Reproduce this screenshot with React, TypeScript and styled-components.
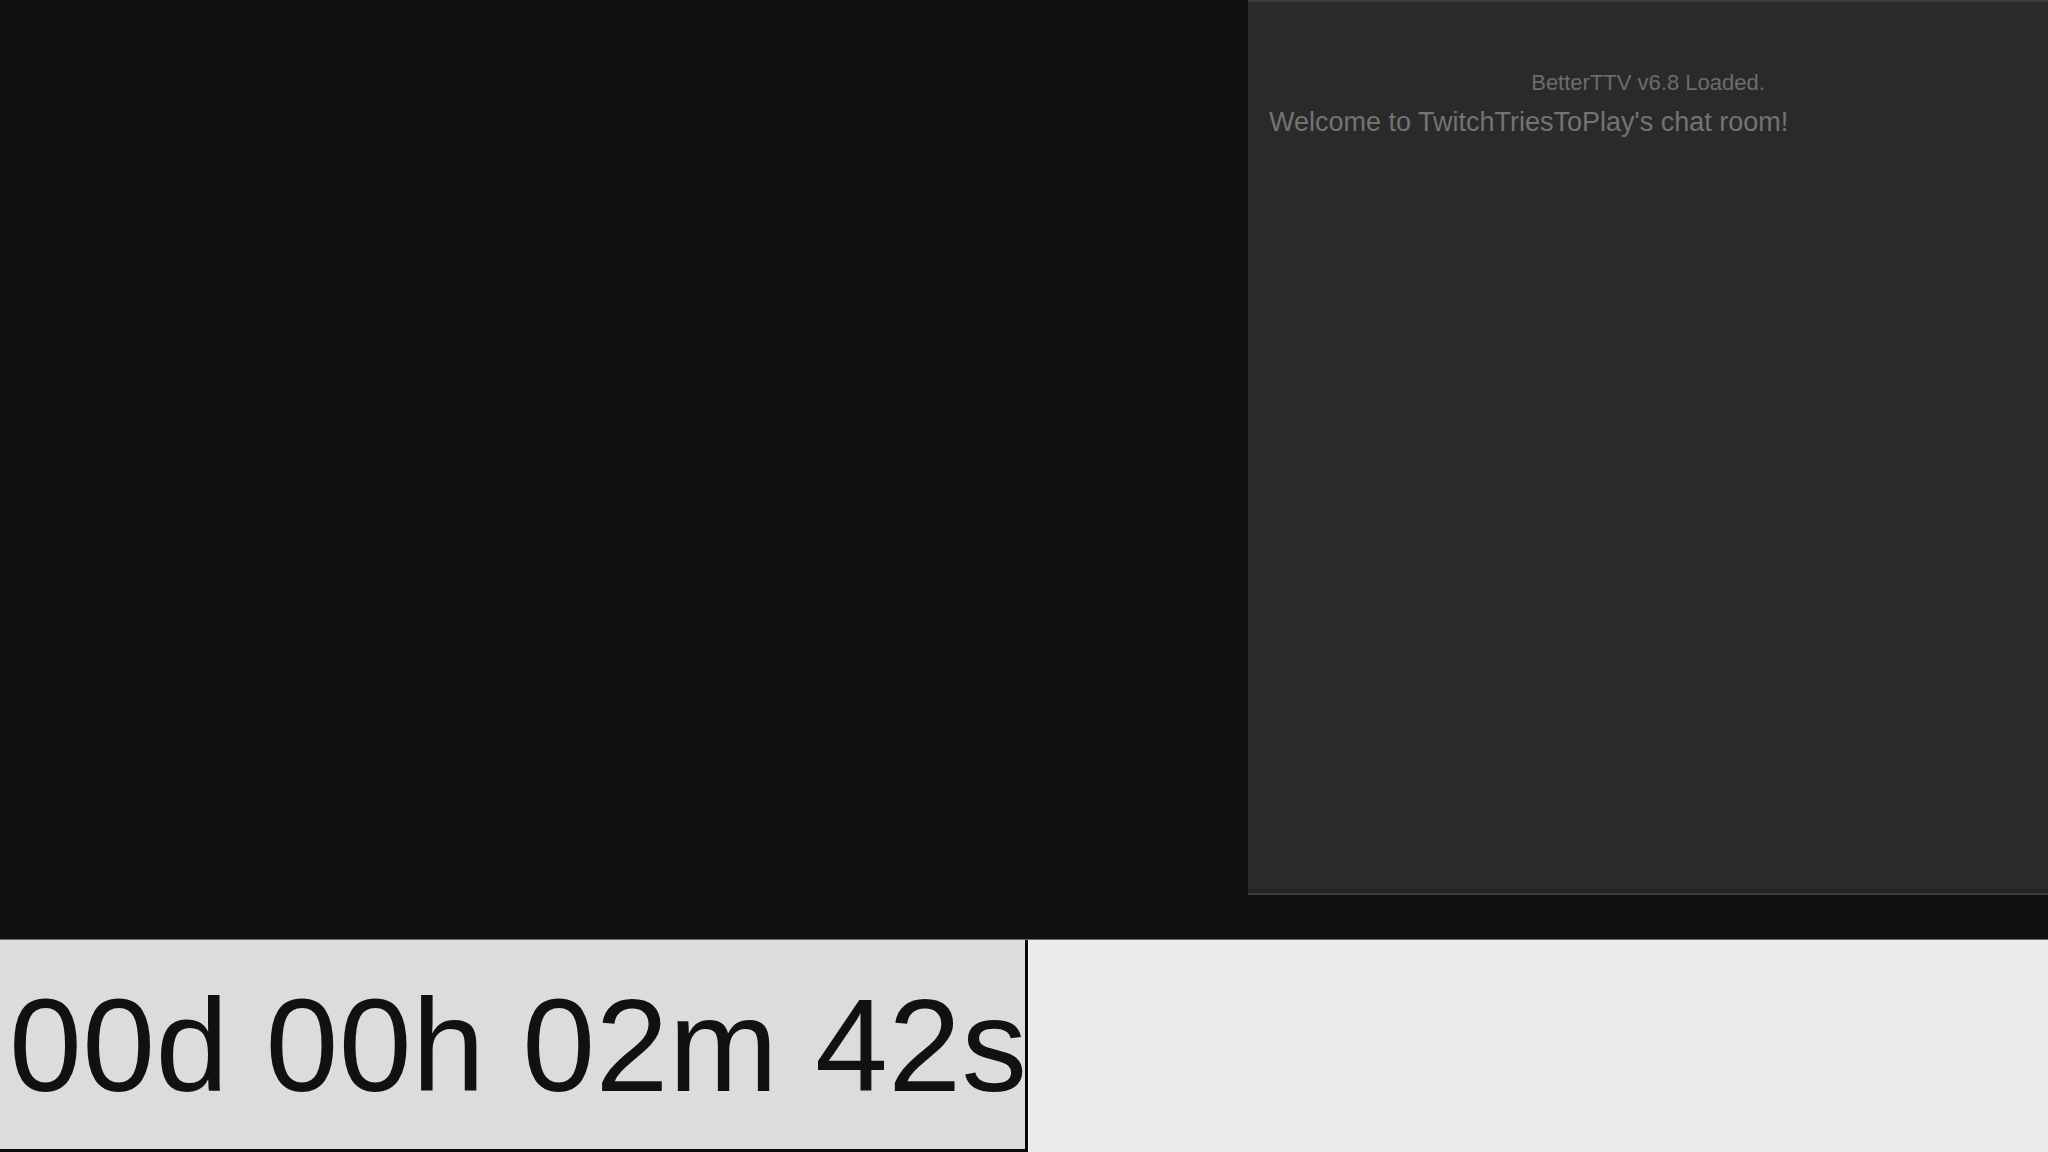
import styled, { createGlobalStyle } from "styled-components";

const Global = createGlobalStyle`
  html, body { margin: 0; padding: 0; background: #111111; }
  body { font-family: "Liberation Sans", Arial, sans-serif; }
`;

const Page = styled.div`
  width: 2048px;
  height: 1152px;
  display: flex;
  flex-direction: column;
  background: #111111;
  overflow: hidden;
`;

const Stage = styled.div`
  height: 939px;
  display: flex;
`;

const Video = styled.div`
  flex: 1;
  background: #111111;
`;

const Chat = styled.div`
  width: 800px;
  height: 893px;
  box-sizing: border-box;
  background: #2a2a2a;
  border-top: 2px solid #3c3c3c;
  border-bottom: 4px solid #232323;
  box-shadow: 0 2px 0 #3a3a3a;
  display: flex;
  flex-direction: column;
  padding-top: 70px;
`;

const System = styled.div`
  font-size: 22px;
  line-height: 22px;
  color: #6c6c6c;
  text-align: center;
  margin-bottom: 15px;
`;

const Message = styled.div`
  font-size: 27px;
  line-height: 27px;
  color: #737373;
  padding-left: 21px;
`;

const Bottom = styled.div`
  flex: 1;
  display: flex;
  border-top: 1px solid #6a6a6a;
  background: #ebebeb;
`;

const Timer = styled.div`
  width: 1028px;
  box-sizing: border-box;
  background: #dcdcdc;
  border-right: 3px solid #0a0a0a;
  border-bottom: 3px solid #0a0a0a;
  padding: 40px 0 0 9px;
  font-size: 131px;
  line-height: 131px;
  letter-spacing: 0.4px;
  color: #111111;
  white-space: nowrap;
  overflow: hidden;
`;

const Rest = styled.div`
  flex: 1;
  background: #ebebeb;
  border-left: 1px solid #f6f6f6;
`;

export default function App() {
  return (
    <Page>
      <Global />
      <Stage>
        <Video />
        <Chat>
          <System>BetterTTV v6.8 Loaded.</System>
          <Message>Welcome to TwitchTriesToPlay's chat room!</Message>
        </Chat>
      </Stage>
      <Bottom>
        <Timer>00d 00h 02m 42s</Timer>
        <Rest />
      </Bottom>
    </Page>
  );
}
